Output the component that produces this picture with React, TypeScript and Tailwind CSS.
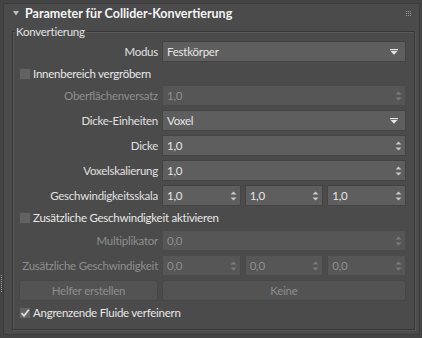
import type { ReactNode } from 'react';

function Spinner({ dim }: { dim?: boolean }) {
  const c = dim ? '#7a7a7a' : '#c8c8c8';
  return (
    <svg width="7" height="10" viewBox="0 0 7 10" className="shrink-0">
      <path d="M3.5 0.5 L6.5 3.5 L0.5 3.5 Z" fill={c} />
      <path d="M0.5 6.5 L6.5 6.5 L3.5 9.5 Z" fill={c} />
    </svg>
  );
}

function DropArrow() {
  return (
    <svg width="8" height="6" viewBox="0 0 8 6" className="shrink-0">
      <rect x="0" y="0" width="8" height="1.2" fill="#e6e6e6" />
      <path d="M0.5 2 L7.5 2 L4 5.8 Z" fill="#e6e6e6" />
    </svg>
  );
}

function Field({ value, kind, dim, className }: { value: string; kind: 'drop' | 'spin'; dim?: boolean; className?: string }) {
  return (
    <div
      className={`h-[21px] flex items-center justify-between pl-[4px] pr-[3px] border rounded-[1px] ${
        dim ? 'bg-[#565656] border-[#4a4a4a] text-[#8e8e8e]' : 'bg-[#5e5e5e] border-[#434343] text-[#e6e6e6]'
      } ${className ?? ''}`}
    >
      <span className="leading-none">{value}</span>
      {kind === 'drop' ? <span className="pr-[4px]"><DropArrow /></span> : <Spinner dim={dim} />}
    </div>
  );
}

function Row({ label, dim, children }: { label: string; dim?: boolean; children: ReactNode }) {
  return (
    <div className="flex items-center">
      <div className={`w-[148px] text-right pr-[4px] whitespace-nowrap ${dim ? 'text-[#8e8e8e]' : 'text-[#e0e0e0]'}`}>{label}</div>
      <div className="w-[244px]">{children}</div>
    </div>
  );
}

function Check({ label, checked, h }: { label: string; checked?: boolean; h: string }) {
  return (
    <div className={`flex items-center pl-[5px] ${h}`}>
      <div className="w-[12px] h-[12px] bg-[#626262] border border-[#4e4e4e] flex items-center justify-center">
        {checked && (
          <svg width="10" height="10" viewBox="0 0 10 10">
            <path d="M1.5 5 L4 7.8 L8.8 1.8" stroke="#dedede" strokeWidth="1.8" fill="none" />
          </svg>
        )}
      </div>
      <span className="ml-[2px] text-[#e8e8e8] whitespace-nowrap">{label}</span>
    </div>
  );
}

export default function App() {
  return (
    <div className="w-[422px] h-[338px] bg-[#444444] relative pt-[3px] pl-[3px] font-['Lato',sans-serif] text-[11.5px] tracking-[-0.25px] leading-none overflow-hidden">
      <div className="absolute left-[1px] top-[275px] h-[17px] border-l border-dotted border-[#9a9a9a]" />
      <div className="w-[417px] h-[332px] bg-[#4b4b4b] border border-[#3c3c3c] rounded-[2px] flex flex-col">
        <div className="h-[27px] flex items-center pl-[9px] pr-[8px] pb-[7px]">
          <svg width="6" height="5" viewBox="0 0 6 5" className="mt-[-2px]">
            <path d="M0 0 L6 0 L3 4.5 Z" fill="#c0c0c0" />
          </svg>
          <span className="ml-[6px] font-bold text-[#f4f4f4] text-[12.5px] tracking-normal">Parameter für Collider-Konvertierung</span>
          <div className="ml-auto grid grid-cols-3 gap-[1px] mt-[-2px]">
            {Array.from({ length: 9 }).map((_, i) => (
              <div key={i} className="w-[1px] h-[1px] bg-[#9a9a9a]" />
            ))}
          </div>
        </div>
        <div className="ml-[8px] w-[403px] h-[299px] border-t border-l border-[#363636] border-b border-r relative shadow-[inset_1px_1px_0_#5a5a5a,1px_1px_0_#585858]">
          <div className="absolute left-[2px] top-[-6px] px-[1px] bg-[#4b4b4b] text-[#e2e2e2]">Konvertierung</div>
          <div className="pt-[9px] pl-[1px] flex flex-col">
            <Row label="Modus">
              <Field value="Festkörper" kind="drop" />
            </Row>
            <div className="mt-[4px]">
              <Check label="Innenbereich vergröbern" h="h-[15px]" />
            </div>
            <div className="mt-[4px] flex flex-col gap-[4px]">
              <Row label="Oberflächenversatz" dim>
                <Field value="1,0" kind="spin" dim />
              </Row>
              <Row label="Dicke-Einheiten">
                <Field value="Voxel" kind="drop" />
              </Row>
              <Row label="Dicke">
                <Field value="1,0" kind="spin" />
              </Row>
              <Row label="Voxelskalierung">
                <Field value="1,0" kind="spin" />
              </Row>
              <Row label="Geschwindigkeitsskala">
                <div className="flex gap-[4px]">
                  <Field value="1,0" kind="spin" className="flex-1" />
                  <Field value="1,0" kind="spin" className="flex-1" />
                  <Field value="1,0" kind="spin" className="flex-1" />
                </div>
              </Row>
            </div>
            <div className="mt-[4px]">
              <Check label="Zusätzliche Geschwindigkeit aktivieren" h="h-[16px]" />
            </div>
            <div className="mt-[4px] flex flex-col gap-[4px]">
              <Row label="Multiplikator" dim>
                <Field value="0,0" kind="spin" dim />
              </Row>
              <Row label="Zusätzliche Geschwindigkeit" dim>
                <div className="flex gap-[4px]">
                  <Field value="0,0" kind="spin" dim className="flex-1" />
                  <Field value="0,0" kind="spin" dim className="flex-1" />
                  <Field value="0,0" kind="spin" dim className="flex-1" />
                </div>
              </Row>
              <div className="flex items-center pl-[5px] gap-[4px]">
                <div className="w-[139px] h-[21px] flex items-center justify-center bg-[#535353] border border-[#474747] rounded-[3px] text-[#8e8e8e]">
                  Helfer erstellen
                </div>
                <div className="w-[244px] h-[21px] flex items-center justify-center bg-[#535353] border border-[#474747] rounded-[3px] text-[#8e8e8e]">
                  Keine
                </div>
              </div>
            </div>
            <div className="mt-[4px]">
              <Check label="Angrenzende Fluide verfeinern" checked h="h-[16px]" />
            </div>
          </div>
        </div>
      </div>
    </div>
  );
}
